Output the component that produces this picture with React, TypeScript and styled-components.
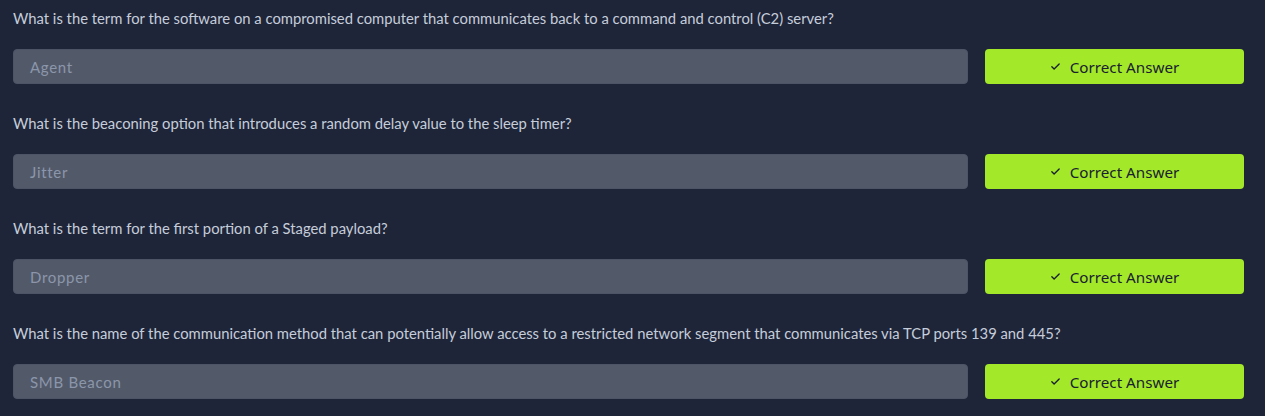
import React from "react";
import styled, { createGlobalStyle } from "styled-components";

const Global = createGlobalStyle`
  html, body { margin: 0; padding: 0; background: #1e2539; }
  body { font-family: "Lato", "Noto Sans", sans-serif; }
`;

const Page = styled.div`
  padding: 8px 21px 0 13px;
  display: flex;
  flex-direction: column;
  gap: 29px;
`;

const Block = styled.div`
  display: flex;
  flex-direction: column;
  gap: 21px;
`;

const Question = styled.div`
  font-family: "Lato", sans-serif;
  font-size: 14.8px;
  line-height: 20px;
  color: #c6cdda;
  white-space: nowrap;
`;

const Row = styled.div`
  display: flex;
  gap: 17px;
  height: 35px;
`;

const AnswerBox = styled.div`
  flex: 1;
  box-sizing: border-box;
  background: #525a69;
  border: 1px solid #4c5466;
  border-radius: 4px;
  display: flex;
  align-items: center;
  padding: 0 16px;
  font-family: "Lato", sans-serif;
  font-size: 15px;
  letter-spacing: 0.7px;
  color: #8c96ab;
`;

const Button = styled.button`
  width: 259px;
  height: 35px;
  border: none;
  border-radius: 4px;
  background: #a3e92a;
  color: #1a2030;
  display: flex;
  align-items: center;
  justify-content: center;
  gap: 9px;
  font-family: "Noto Sans", sans-serif;
  font-size: 15.2px;
  padding: 0;
`;

const Check = () => (
  <svg width="11" height="11" viewBox="0 0 24 24" fill="none" stroke="#1a2030" strokeWidth="3" strokeLinecap="round" strokeLinejoin="round">
    <path d="M4 12.5l5 5L20 6.5" />
  </svg>
);

const items = [
  { q: "What is the term for the software on a compromised computer that communicates back to a command and control (C2) server?", a: "Agent" },
  { q: "What is the beaconing option that introduces a random delay value to the sleep timer?", a: "Jitter" },
  { q: "What is the term for the first portion of a Staged payload?", a: "Dropper" },
  { q: "What is the name of the communication method that can potentially allow access to a restricted network segment that communicates via TCP ports 139 and 445?", a: "SMB Beacon" },
];

export default function App() {
  return (
    <>
      <Global />
      <Page>
        {items.map((it) => (
          <Block key={it.a}>
            <Question>{it.q}</Question>
            <Row>
              <AnswerBox>{it.a}</AnswerBox>
              <Button>
                <Check />
                Correct Answer
              </Button>
            </Row>
          </Block>
        ))}
      </Page>
    </>
  );
}
